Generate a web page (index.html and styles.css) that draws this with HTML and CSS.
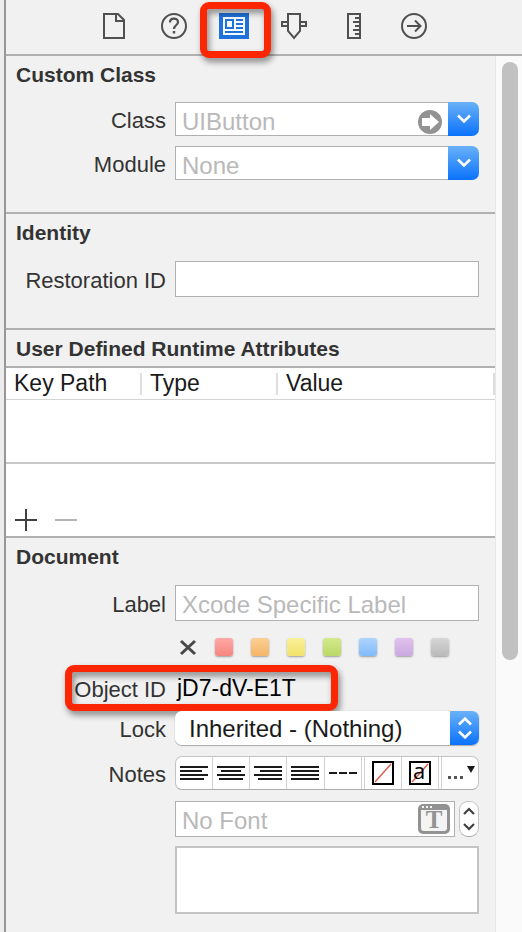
FILE: index.html
```html
<!DOCTYPE html>
<html lang="en">
<head>
    <meta charset="UTF-8">
    <meta name="viewport" content="width=device-width, initial-scale=1.0">
    <title>Identity Inspector</title>
    <link rel="stylesheet" href="styles.css">
</head>
<body>
    <div class="inspector">
        <nav class="toolbar">
            <button class="tab" aria-label="File inspector">
                <svg width="30" height="30" viewBox="0 0 30 30" fill="none" stroke="#505050" stroke-width="2"><path d="M5 3h14l6 6v18H5z"/><path d="M17 3v7h8"/></svg>
            </button>
            <button class="tab" aria-label="Quick help">
                <svg width="30" height="30" viewBox="0 0 30 30" fill="none" stroke="#505050" stroke-width="2"><circle cx="15" cy="15" r="12"/><path d="M11 11.500c0-5 8-5 8-.5 0 3.500-4 3-4 7" stroke-width="2.200"/><path d="M15 20v2.500" stroke-width="2.400"/></svg>
            </button>
            <button class="tab active" aria-label="Identity inspector">
                <svg width="30" height="26" viewBox="0 0 30 26"><path fill="#1f72dc" d="M0 0h30v26H0z"/><path fill="#f4f8ff" d="M4 4h22v18H4z"/><path fill="none" stroke="#1f72dc" stroke-width="2" d="M7 7h7v8H7zM17 7h7M17 11h7M17 15h7M6 19h18"/></svg>
                <span class="highlight"></span>
            </button>
            <button class="tab" aria-label="Attributes inspector">
                <svg width="30" height="30" viewBox="0 0 30 30" fill="none" stroke="#505050" stroke-width="2"><path d="M9 3h12v17l-6 7-6-7z"/><path d="M9 11H3v4h6M21 11h6v4h-6"/></svg>
            </button>
            <button class="tab" aria-label="Size inspector">
                <svg width="30" height="30" viewBox="0 0 30 30" fill="none" stroke="#505050" stroke-width="2"><path d="M9 3h12v24H9z"/><path d="M16 7h5M14 11h7M16 15h5M14 19h7M16 23h5"/></svg>
            </button>
            <button class="tab" aria-label="Connections inspector">
                <svg width="30" height="30" viewBox="0 0 30 30" fill="none" stroke="#505050" stroke-width="2"><circle cx="15" cy="15" r="12"/><path d="M8 15h13M16 9.500l5.500 5.500-5.500 5.500"/></svg>
            </button>
        </nav>

        <div class="main">
            <div class="panel">
                <section class="section">
                    <h2>Custom Class</h2>
                    <div class="rows">
                        <div class="row">
                            <label for="class">Class</label>
                            <div class="combo">
                                <input id="class" type="text" placeholder="UIButton">
                                <button class="jump" aria-label="Go to class">
                                    <svg width="24" height="24" viewBox="0 0 24 24"><circle cx="12" cy="12" r="12" fill="#929292"/><path fill="#fff" d="M4 8h8V4l9 8-9 8v-4H4z"/></svg>
                                </button>
                                <button class="drop" aria-label="Show classes">
                                    <svg width="16" height="10" viewBox="0 0 16 10" fill="none" stroke="#fff" stroke-width="2.500"><path d="M2 1.500l6 6 6-6"/></svg>
                                </button>
                            </div>
                        </div>
                        <div class="row">
                            <label for="module">Module</label>
                            <div class="combo">
                                <input id="module" type="text" placeholder="None">
                                <button class="drop" aria-label="Show modules">
                                    <svg width="16" height="10" viewBox="0 0 16 10" fill="none" stroke="#fff" stroke-width="2.500"><path d="M2 1.500l6 6 6-6"/></svg>
                                </button>
                            </div>
                        </div>
                    </div>
                </section>

                <section class="section">
                    <h2>Identity</h2>
                    <div class="rows single">
                        <div class="row">
                            <label for="restoration">Restoration ID</label>
                            <input id="restoration" class="field" type="text">
                        </div>
                    </div>
                </section>

                <section class="section">
                    <h2 class="ruled">User Defined Runtime Attributes</h2>
                    <table>
                        <colgroup>
                            <col class="col-key">
                            <col class="col-type">
                            <col>
                        </colgroup>
                        <thead>
                            <tr>
                                <th>Key Path</th>
                                <th>Type</th>
                                <th>Value</th>
                            </tr>
                        </thead>
                        <tbody>
                            <tr><td colspan="3"></td></tr>
                        </tbody>
                    </table>
                    <div class="table-footer">
                        <button aria-label="Add attribute">
                            <svg width="22" height="22" viewBox="0 0 22 22" stroke="#404040" stroke-width="2"><path d="M0 11h22M11 0v22"/></svg>
                        </button>
                        <button aria-label="Remove attribute" disabled>
                            <svg width="22" height="22" viewBox="0 0 22 22" stroke="#b4b4b4" stroke-width="2"><path d="M0 11h22"/></svg>
                        </button>
                    </div>
                </section>

                <section class="section">
                    <h2>Document</h2>
                    <div class="rows document">
                        <div class="row">
                            <label for="label">Label</label>
                            <input id="label" class="field" type="text" placeholder="Xcode Specific Label">
                        </div>
                        <div class="row">
                            <div class="swatches">
                                <button aria-label="No color"><svg width="18" height="18" viewBox="0 0 18 18" stroke="#484848" stroke-width="3"><path d="M2 3l14 13M16 3L2 16"/></svg></button>
                                <button class="swatch red" aria-label="Red"></button>
                                <button class="swatch orange" aria-label="Orange"></button>
                                <button class="swatch yellow" aria-label="Yellow"></button>
                                <button class="swatch green" aria-label="Green"></button>
                                <button class="swatch blue" aria-label="Blue"></button>
                                <button class="swatch purple" aria-label="Purple"></button>
                                <button class="swatch gray" aria-label="Gray"></button>
                            </div>
                        </div>
                        <div class="row object-row">
                            <label for="object-id">Object ID</label>
                            <output id="object-id">jD7-dV-E1T</output>
                            <span class="highlight"></span>
                        </div>
                        <div class="row">
                            <label for="lock">Lock</label>
                            <div class="popup">
                                <select id="lock">
                                    <option>Inherited - (Nothing)</option>
                                </select>
                                <span class="cap">
                                    <svg width="16" height="22" viewBox="0 0 16 22" fill="none" stroke="#fff" stroke-width="2.500"><path d="M2 7.500l6-6 6 6M2 14.500l6 6 6-6"/></svg>
                                </span>
                            </div>
                        </div>
                        <div class="row notes">
                            <label for="notes">Notes</label>
                            <div class="segments">
                                <button aria-label="Align left"><svg width="30" height="16" viewBox="0 0 30 16" stroke="#1a1a1a" stroke-width="2"><path d="M1 2h28M1 6h22M1 10h28M1 14h24"/></svg></button>
                                <button aria-label="Align center"><svg width="30" height="16" viewBox="0 0 30 16" stroke="#1a1a1a" stroke-width="2"><path d="M1 2h28M5 6h20M1 10h28M3 14h24"/></svg></button>
                                <button aria-label="Align right"><svg width="30" height="16" viewBox="0 0 30 16" stroke="#1a1a1a" stroke-width="2"><path d="M1 2h28M7 6h22M1 10h28M5 14h24"/></svg></button>
                                <button aria-label="Justify"><svg width="30" height="16" viewBox="0 0 30 16" stroke="#1a1a1a" stroke-width="2"><path d="M1 2h28M1 6h28M1 10h28M1 14h28"/></svg></button>
                                <button class="double" aria-label="Natural alignment"><svg width="30" height="16" viewBox="0 0 30 16" stroke="#1a1a1a" stroke-width="2"><path d="M1 8h8M11 8h8M21 8h8"/></svg></button>
                                <button aria-label="Text color"><svg width="22" height="24" viewBox="0 0 22 24"><path fill="#fff" stroke="#000" stroke-width="2" d="M1 1h20v22H1z"/><path stroke="#dd6150" stroke-width="1.500" d="M3 21L19 3"/></svg></button>
                                <button class="double letter" aria-label="Background color"><svg width="22" height="24" viewBox="0 0 22 24"><path fill="#fff" stroke="#000" stroke-width="2" d="M1 1h20v22H1z"/><path stroke="#dd6150" stroke-width="1.500" d="M3 21L19 3"/><text x="4" y="18">a</text></svg></button>
                                <button aria-label="More"><svg width="30" height="20" viewBox="0 0 30 20"><path fill="#1a1a1a" d="M22 3h8l-4 7z"/><path fill="#555" d="M3 13h3v3H3zM9 13h3v3H9zM15 13h3v3h-3z"/></svg></button>
                            </div>
                        </div>
                        <div class="row font">
                            <div class="font-picker">
                                <input class="field" type="text" placeholder="No Font" aria-label="Font">
                                <button class="font-button" aria-label="Choose font">
                                    <svg width="32" height="30" viewBox="0 0 32 30"><rect width="32" height="30" rx="5" fill="#929292"/><path fill="#f4f4f4" d="M3 6h26v18a3 3 0 0 1-3 3H6a3 3 0 0 1-3-3zM4 2h2v2H4zM8 2h2v2H8zM12 2h2v2h-2z"/><text x="16" y="24" text-anchor="middle">T</text></svg>
                                </button>
                                <button class="stepper" aria-label="Font size">
                                    <svg width="12" height="24" viewBox="0 0 12 24" fill="none" stroke="#404040" stroke-width="2.200"><path d="M1 7l5-5 5 5M1 17l5 5 5-5"/></svg>
                                </button>
                            </div>
                        </div>
                        <div class="row">
                            <textarea id="notes"></textarea>
                        </div>
                    </div>
                </section>
            </div>
            <div class="scrollbar"><div class="thumb"></div></div>
        </div>
    </div>
</body>
</html>
```
FILE: styles.css
```css
* {
    box-sizing: border-box;
}
body {
    margin: 0;
    padding-left: 4px;
    background-color: #ededed;
    font-family: "Liberation Sans", Arial, sans-serif;
    font-size: 22px;
    color: #333;
}
button {
    display: flex;
    align-items: center;
    justify-content: center;
    padding: 0;
    border: none;
    background: none;
}
input, textarea, select {
    font-family: inherit;
    font-size: 24px;
    color: #1a1a1a;
    border: 1px solid #b0b0b0;
    border-radius: 0;
    background-color: #fff;
    outline: none;
    min-width: 0;
}
::placeholder {
    color: #b9b9b9;
    opacity: 1;
}
.inspector {
    display: flex;
    flex-direction: column;
    min-height: 100vh;
    border-left: 2px solid #979797;
    background-color: #f1f1f1;
}

/* toolbar */
.toolbar {
    display: flex;
    justify-content: center;
    border-bottom: 2px solid #b0b0b0;
}
.tab {
    position: relative;
    width: 60px;
    height: 54px;
    padding-bottom: 2px;
}
.highlight {
    position: absolute;
    border: 7px solid #fc2603;
    border-radius: 9px;
    filter: drop-shadow(2px 4px 3px rgba(0,0,0,0.45));
    pointer-events: none;
}
.tab .highlight {
    top: 2px;
    left: -4px;
    width: 71px;
    height: 56px;
}

/* sections */
.main {
    display: flex;
    flex: 1;
}
.panel {
    flex: 1;
    min-width: 0;
}
.section {
    border-bottom: 2px solid #b0b0b0;
}
.section:last-child {
    border-bottom: none;
}
h2 {
    margin: 0;
    padding-left: 10px;
    font-size: 21px;
    line-height: 38px;
    height: 36px;
}
h2.ruled {
    height: 38px;
    border-bottom: 2px solid #b0b0b0;
}
.rows {
    display: flex;
    flex-direction: column;
    gap: 10px;
    padding: 10px 16px 32px 0;
}
.rows.single {
    padding-top: 11px;
    padding-bottom: 31px;
}
.rows.document {
    gap: 0;
    padding-top: 11px;
    padding-bottom: 16px;
}
.row {
    display: grid;
    grid-template-columns: 160px minmax(0, 1fr);
    column-gap: 9px;
    align-items: center;
}
.row > :not(label):not(.highlight) {
    grid-column: 2;
}
.row label {
    padding-top: 4px;
    text-align: right;
}
.field {
    width: 100%;
    height: 36px;
    padding: 4px 6px 0;
}

/* combo box */
.combo {
    display: flex;
    position: relative;
    height: 34px;
}
.combo input {
    flex: 1;
    padding: 5px 6px 0;
    border-right: none;
}
.drop, .cap {
    width: 31px;
    border-radius: 0 7px 7px 0;
    background-image: linear-gradient(#6ab1f8, #0a72fc);
}
.jump {
    position: absolute;
    top: 8px;
    right: 37px;
}

/* runtime attributes */
table {
    width: 100%;
    table-layout: fixed;
    border-collapse: separate;
    border-spacing: 0;
    background-color: #fff;
}
.col-key {
    width: 136px;
}
.col-type {
    width: 136px;
}
th {
    height: 32px;
    padding: 0 0 2px 8px;
    border-bottom: 1px solid #d4d4d4;
    background: linear-gradient(#dedede, #dedede) right center / 2px 22px no-repeat;
    font-size: 23px;
    font-weight: normal;
    line-height: 26px;
    text-align: left;
    color: #1a1a1a;
}
td {
    height: 64px;
    padding: 0;
    border-bottom: 2px solid #c8c8c8;
}
.table-footer {
    display: flex;
    align-items: flex-end;
    gap: 18px;
    height: 72px;
    padding: 0 9px 5px;
    background-color: #fff;
}

/* document */
.swatches {
    display: flex;
    gap: 18px;
    height: 44px;
    padding: 8px 0 0 4px;
    align-items: center;
}
.swatch {
    width: 18px;
    height: 18px;
    border-radius: 3px;
    box-shadow: 0 1px 2px rgba(0,0,0,0.35);
}
.red { background: linear-gradient(#ffa9a6, #f58681); }
.orange { background: linear-gradient(#fbcf94, #f5b566); }
.yellow { background: linear-gradient(#faf09a, #f2e26b); }
.green { background: linear-gradient(#d3e98c, #b9d966); }
.blue { background: linear-gradient(#acd4ff, #80bafa); }
.purple { background: linear-gradient(#dfc2ee, #cba8e0); }
.gray { background: linear-gradient(#d6d6d6, #bababa); }
.object-row {
    position: relative;
    height: 46px;
}
.object-row .highlight {
    top: 0;
    left: 59px;
    width: 273px;
    height: 46px;
}
output {
    padding-left: 2px;
    font-size: 23px;
    color: #000;
}
.popup {
    display: flex;
    height: 34px;
    border-radius: 7px;
    box-shadow: 0 1px 1px #aaa, 0 0 1px #aaa;
    position: relative;
}
.popup select {
    flex: 1;
    appearance: none;
    padding: 1px 14px 0;
    border: none;
    border-radius: 7px;
}
.cap {
    position: absolute;
    top: 0;
    right: 0;
    width: 29px;
    height: 34px;
    display: flex;
    align-items: center;
    justify-content: center;
    pointer-events: none;
}
.notes, .font {
    margin-top: 11px;
}
.segments {
    display: flex;
    height: 34px;
    border: 1px solid #c4c4c4;
    border-bottom-color: #aaa;
    border-radius: 7px;
    background-color: #fff;
}
.segments button {
    flex: 1;
    min-width: 0;
    border-right: 1px solid #d2d2d2;
}
.segments button:last-child {
    border-right: none;
}
.segments .double {
    border-right: 4px double #d2d2d2;
}
.letter svg {
    overflow: visible;
}
.letter text {
    font-family: "Open Sans", sans-serif;
    font-size: 22px;
    fill: #000;
}
.font-picker {
    display: flex;
    gap: 4px;
    position: relative;
    margin-bottom: 9px;
}
.font-picker .field {
    flex: 1;
}
.font-button {
    position: absolute;
    top: 3px;
    right: 29px;
}
.font-button text {
    font-family: "Liberation Serif", serif;
    font-size: 25px;
    font-weight: bold;
    fill: #929292;
}
.stepper {
    width: 20px;
    border: 1px solid #c4c4c4;
    border-bottom-color: #aaa;
    border-radius: 9px;
    background-color: #fff;
}
textarea {
    display: block;
    width: 100%;
    height: 68px;
    border: 2px solid #c4c4c4;
    resize: none;
}

/* scrollbar */
.scrollbar {
    width: 27px;
    padding: 6px 4px 0 6px;
    border-left: 1px solid #e6e6e6;
    background-color: #fafafa;
}
.thumb {
    width: 16px;
    height: 598px;
    border-radius: 8px;
    background-color: #c1c1c1;
}
```
